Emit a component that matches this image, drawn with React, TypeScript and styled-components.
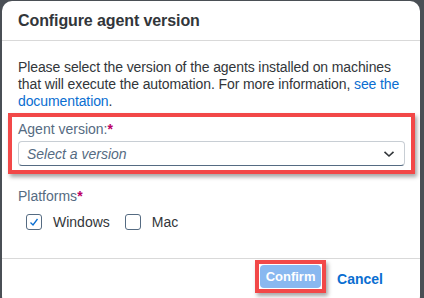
import React from "react";
import styled, { createGlobalStyle } from "styled-components";

const Global = createGlobalStyle`
  html, body { margin: 0; padding: 0; background: #4a4f55; overflow: hidden; }
  body { font-family: "Liberation Sans", Arial, sans-serif; }
  * { box-sizing: border-box; }
`;

const Page = styled.div`
  width: 424px;
  height: 298px;
  padding: 1px 4px 0 2px;
  background: #4a4f55;
  overflow: hidden;
`;

const Dialog = styled.div`
  height: 305px;
  background: #ffffff;
  border-radius: 10px;
  display: flex;
  flex-direction: column;
`;

const Header = styled.div`
  height: 40px;
  flex: none;
  display: flex;
  align-items: center;
  padding: 0 16px;
  border-bottom: 1px solid #d9d9d9;
`;

const Title = styled.h1`
  margin: 0;
  font-size: 16px;
  font-weight: 700;
  color: #32363a;
  letter-spacing: -0.1px;
`;

const Body = styled.div`
  flex: 1;
  padding: 18px 10px 0 16px;
  display: flex;
  flex-direction: column;
`;

const Intro = styled.p`
  margin: 0;
  font-size: 14px;
  line-height: 17px;
  letter-spacing: -0.1px;
  color: #32363a;
`;

const Link = styled.a`
  color: #0a6ed1;
  text-decoration: none;
`;

const Highlight = styled.div`
  border: 4px solid #f24848;
  box-shadow: 2px 3px 4px rgba(0, 0, 0, 0.35);
  margin: 3px -5px 0 -10px;
  padding: 4px 6px 4px 6px;
  display: flex;
  flex-direction: column;
  gap: 3px;
`;

const Label = styled.label`
  font-size: 14px;
  line-height: 17px;
  color: #556b82;
`;

const Required = styled.span`
  color: #bb0066;
  font-weight: 700;
`;

const Select = styled.div`
  height: 25px;
  border: 1px solid #c8ced4;
  border-bottom: 1px solid #556b82;
  border-radius: 4px;
  display: flex;
  align-items: center;
  justify-content: space-between;
  padding: 0 8px 0 8px;
`;

const Placeholder = styled.span`
  font-size: 14px;
  font-style: italic;
  color: #556b82;
`;

const Platforms = styled.div`
  margin-top: 14px;
  display: flex;
  flex-direction: column;
  gap: 9px;
`;

const CheckRow = styled.div`
  display: flex;
  align-items: center;
  padding-left: 8px;
`;

const CheckItem = styled.div`
  display: flex;
  align-items: center;
  gap: 11px;
  margin-right: 15px;
  font-size: 14px;
  color: #32363a;
`;

const Box = styled.span`
  width: 16px;
  height: 16px;
  border: 1px solid #556b82;
  border-radius: 3px;
  display: flex;
  align-items: center;
  justify-content: center;
`;

const Footer = styled.div`
  height: 48px;
  flex: none;
  border-top: 1px solid #d9d9d9;
  display: flex;
  align-items: flex-start;
  justify-content: flex-end;
  padding: 1px 37px 0 0;
  gap: 11px;
`;

const ConfirmFrame = styled.div`
  border: 4px solid #f24848;
  padding: 1px;
  background: #ffffff;
  box-shadow: 2px 3px 4px rgba(0, 0, 0, 0.35);
`;

const ConfirmButton = styled.button`
  width: 61px;
  height: 23px;
  padding: 0;
  border: none;
  border-radius: 4px;
  background: #89b8f0;
  color: #ffffff;
  font-family: inherit;
  font-size: 13px;
  font-weight: 700;
  display: flex;
  align-items: center;
  justify-content: center;
`;

const CancelButton = styled.button`
  height: 33px;
  border: none;
  background: transparent;
  color: #0a6ed1;
  font-family: inherit;
  font-size: 14px;
  font-weight: 700;
  padding: 0;
  margin-top: 2px;
`;

export default function App() {
  return (
    <Page>
      <Global />
      <Dialog>
        <Header>
          <Title>Configure agent version</Title>
        </Header>
        <Body>
          <Intro>
            Please select the version of the agents installed on machines that will execute the
            automation. For more information, <Link href="#">see the documentation</Link>.
          </Intro>
          <Highlight>
            <Label>
              Agent version:<Required>*</Required>
            </Label>
            <Select>
              <Placeholder>Select a version</Placeholder>
              <svg width="14" height="14" viewBox="0 0 14 14">
                <path d="M2.5 4.8 L7 9 L11.5 4.8" fill="none" stroke="#32363a" strokeWidth="1.6" />
              </svg>
            </Select>
          </Highlight>
          <Platforms>
            <Label>
              Platforms<Required>*</Required>
            </Label>
            <CheckRow>
              <CheckItem>
                <Box>
                  <svg width="12" height="12" viewBox="0 0 12 12">
                    <path d="M2.5 6.5 L5 9 L9.5 3" fill="none" stroke="#0a6ed1" strokeWidth="1.3" />
                  </svg>
                </Box>
                Windows
              </CheckItem>
              <CheckItem>
                <Box />
                Mac
              </CheckItem>
            </CheckRow>
          </Platforms>
        </Body>
        <Footer>
          <ConfirmFrame>
            <ConfirmButton>Confirm</ConfirmButton>
          </ConfirmFrame>
          <CancelButton>Cancel</CancelButton>
        </Footer>
      </Dialog>
    </Page>
  );
}
